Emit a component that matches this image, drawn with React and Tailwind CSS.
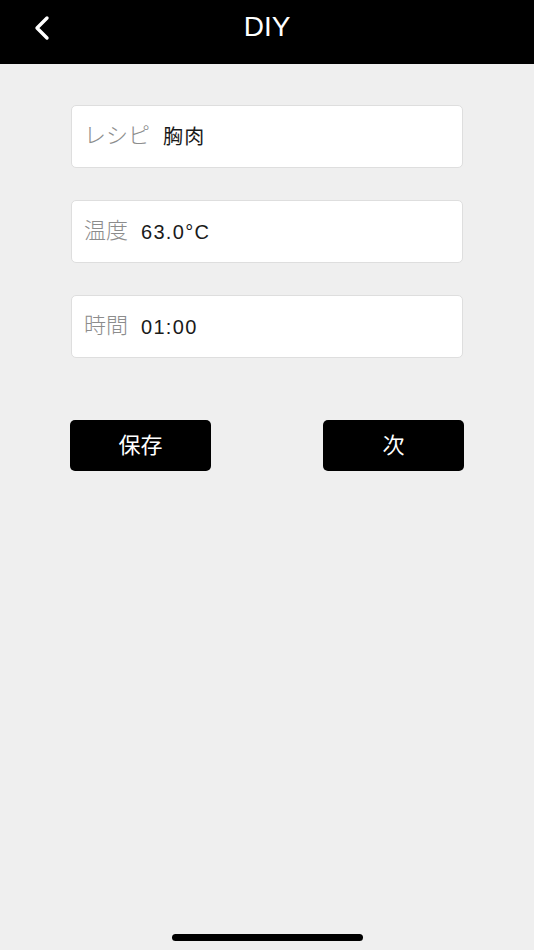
import React from 'react';

const fields = [
  { label: 'レシピ', value: '胸肉' },
  { label: '温度', value: '63.0°C' },
  { label: '時間', value: '01:00' },
];

const font = { fontFamily: '"Liberation Sans", "Noto Sans CJK JP", sans-serif' };

export default function App() {
  return (
    <div className="relative min-h-[950px] w-full bg-[#efefef]" style={font}>
      <header className="relative flex h-16 items-center justify-center bg-black">
        <button className="absolute left-[28px] top-[14px] flex h-7 w-7 items-center justify-center text-white">
          <svg width="22" height="28" viewBox="0 0 22 28" fill="none">
            <path d="M16 4 L6 14 L16 24" stroke="#fff" strokeWidth="3.4" strokeLinecap="round" strokeLinejoin="round" />
          </svg>
        </button>
        <h1 className="-mt-[10px] text-[28px] text-white">DIY</h1>
      </header>

      <div className="flex flex-col gap-[32px] px-[71px] pt-[41px]">
        {fields.map((f) => (
          <div
            key={f.label}
            className="flex h-[63px] items-center gap-[13px] rounded-[5px] border-[1.5px] border-[#dedede] bg-white px-[12px]"
          >
            <span className="-mt-[3px] text-[22px] font-light text-[#8c8c8c]">{f.label}</span>
            <span className="text-[20px] tracking-[1.3px] text-[#1a1a1a]">{f.value}</span>
          </div>
        ))}
      </div>

      <div className="mt-[62px] flex justify-between px-[70px]">
        <button className="flex h-[51px] w-[141px] items-center justify-center rounded-[5px] bg-black text-[22px] text-white">
          保存
        </button>
        <button className="flex h-[51px] w-[141px] items-center justify-center rounded-[5px] bg-black text-[22px] text-white">
          次
        </button>
      </div>

      <div className="absolute bottom-[9px] left-[172px] h-[7px] w-[191px] rounded-full bg-black" />
    </div>
  );
}
